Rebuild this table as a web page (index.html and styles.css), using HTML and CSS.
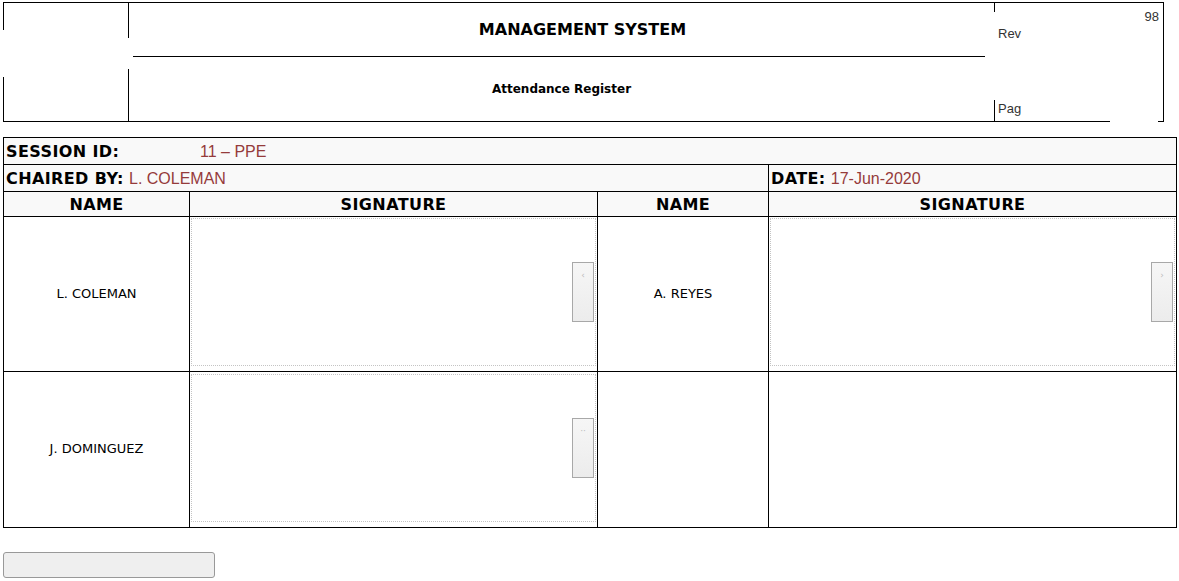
FILE: index.html
```html
<!DOCTYPE html>
<html>
<head>
<meta charset="utf-8">
<link rel="stylesheet" href="styles.css">
</head>
<body>
<div class="page">
  <div class="doc-head">
    <div class="head-grid">
      <div class="logo-cell"></div>
      <div class="title-cell">MANAGEMENT SYSTEM</div>
      <div class="meta-cell">
        <div class="meta-line meta-right">98</div>
        <div class="meta-line">Rev</div>
        <div class="meta-line meta-bottom">Pag</div>
      </div>
      <div class="sub-cell">Attendance Register</div>
    </div>
    <div class="redact r1"></div>
    <div class="redact r2"></div>
    <div class="redact r3"></div>
    <div class="redact r4"></div>
  </div>

  <div class="register">
    <div class="cell info span-all"><span class="info-text"><span class="label label-wide">SESSION ID:</span><span class="value">11 – PPE</span></span></div>
    <div class="cell info span-3"><span class="info-text"><span class="label">CHAIRED BY:</span> <span class="value">L. COLEMAN</span></span></div>
    <div class="cell info"><span class="info-text"><span class="label">DATE:</span> <span class="value">17-Jun-2020</span></span></div>

    <div class="cell th">NAME</div>
    <div class="cell th">SIGNATURE</div>
    <div class="cell th">NAME</div>
    <div class="cell th">SIGNATURE</div>

    <div class="cell name">L. COLEMAN</div>
    <div class="cell sig"><div class="sig-box"><div class="sig-handle">‹</div></div></div>
    <div class="cell name">A. REYES</div>
    <div class="cell sig"><div class="sig-box"><div class="sig-handle">›</div></div></div>

    <div class="cell name">J. DOMINGUEZ</div>
    <div class="cell sig sig2"><div class="sig-box"><div class="sig-handle">··</div></div></div>
    <div class="cell"></div>
    <div class="cell"></div>
  </div>

  <div class="actions">
    <button class="submit-btn" type="button"></button>
  </div>
</div>
</body>
</html>
```

FILE: styles.css
```css
html, body {
  margin: 0;
  padding: 0;
  background: #fff;
}
.page {
  padding: 2px 3px 0 3px;
  font-family: "DejaVu Sans", Verdana, sans-serif;
  color: #000;
}
.doc-head {
  position: relative;
  width: 1161px;
}
.head-grid {
  display: grid;
  grid-template-columns: 124px 865px 168px;
  grid-template-rows: 53px 64px;
  gap: 1px;
  padding: 1px;
  background: #000;
}
.head-grid > div {
  background: #fff;
}
.logo-cell {
  grid-column: 1;
  grid-row: 1 / 3;
}
.title-cell {
  grid-column: 2;
  grid-row: 1;
  display: flex;
  align-items: center;
  justify-content: center;
  padding-left: 42px;
  font-weight: bold;
  font-size: 16px;
}
.sub-cell {
  grid-column: 2;
  grid-row: 2;
  display: flex;
  align-items: center;
  justify-content: center;
  font-weight: bold;
  font-size: 12px;
}
.meta-cell {
  grid-column: 3;
  grid-row: 1 / 3;
  display: flex;
  flex-direction: column;
  padding: 5px 4px 4px 3px;
  font-family: "Liberation Sans", Arial, sans-serif;
  font-size: 13px;
  color: #333;
}
.meta-line {
  height: 17px;
  line-height: 17px;
}
.meta-right {
  text-align: right;
}
.meta-bottom {
  margin-top: auto;
}
.redact {
  position: absolute;
  background: #fff;
}
.r1 { left: -3px; top: 28px; width: 8px; height: 47px; }
.r2 { left: 122px; top: 36px; width: 8px; height: 31px; }
.r3 { left: 982px; top: 10px; width: 12px; height: 88px; }
.r4 { left: 1107px; top: 116px; width: 48px; height: 6px; }

.register {
  margin-top: 15px;
  display: grid;
  grid-template-columns: 185px 407px 170px 407px;
  grid-template-rows: 26px 26px 24px 154px 155px;
  gap: 1px;
  padding: 1px;
  background: #000;
  width: 1172px;
}
.cell {
  background: #fff;
  min-width: 0;
}
.info {
  background: #f9f9f9;
  display: flex;
  align-items: center;
  padding-left: 2px;
}
.info-text {
  white-space: pre;
}
.span-all { grid-column: 1 / 5; }
.span-3 { grid-column: 1 / 4; }
.label {
  font-weight: bold;
  font-size: 16px;
  letter-spacing: 0.4px;
}
.label-wide {
  display: inline-block;
  width: 194px;
}
.value {
  font-family: "Liberation Sans", Arial, sans-serif;
  font-size: 16px;
  color: #953b3b;
}
.th {
  background: #f9f9f9;
  display: flex;
  align-items: center;
  justify-content: center;
  font-weight: bold;
  font-size: 16px;
  letter-spacing: 0.4px;
}
.name {
  display: flex;
  align-items: center;
  justify-content: center;
  font-size: 13px;
  padding-bottom: 2px;
}
.sig {
  padding: 1px 1px 5px 1px;
}
.sig2 {
  padding-top: 2px;
}
.sig-box {
  height: 146px;
  border: 1px dotted #c4c4c4;
  display: flex;
  align-items: center;
  justify-content: flex-end;
  padding-right: 1px;
}
.sig-handle {
  width: 20px;
  height: 58px;
  border: 1px solid #a8a8a8;
  background: linear-gradient(#f6f6f6, #ececec);
  color: #bbb;
  font-size: 9px;
  text-align: center;
  line-height: 24px;
}
.actions {
  margin-top: 24px;
}
.submit-btn {
  display: block;
  width: 212px;
  height: 26px;
  border: 1px solid #999;
  border-radius: 3px;
  background: #efefef;
  padding: 0;
}
```
